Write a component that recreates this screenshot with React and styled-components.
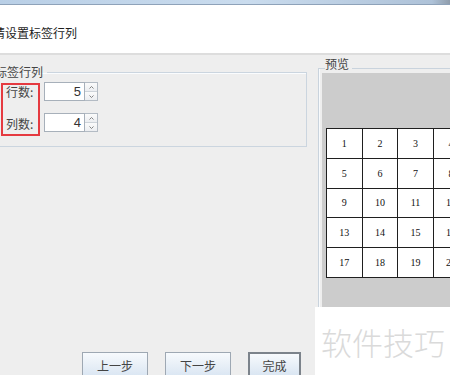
import React from "react";
import styled, { createGlobalStyle } from "styled-components";

const GlobalStyle = createGlobalStyle`
  *, *::before, *::after { box-sizing: border-box; }
  html, body { margin: 0; padding: 0; }
  body {
    width: 450px;
    height: 375px;
    overflow: hidden;
    background: #eeeeee;
    font-family: "Noto Sans CJK SC", "DejaVu Sans", sans-serif;
    color: #333;
  }
`;

const Window = styled.div`
  position: relative;
  width: 450px;
  height: 375px;
  overflow: hidden;
  display: flex;
  flex-direction: column;
`;

const FrameEdge = styled.div`
  flex: none;
  height: 5px;
  background: linear-gradient(to right, #b9cfe6 0%, #cadcee 55%, #aec2d8 96%, #8f9cab 100%);
  border-bottom: 1px solid #8ea2b9;
`;

const Header = styled.div`
  flex: none;
  height: 50px;
  background: #fff;
  border-bottom: 2px solid #dddddd;
  display: flex;
  align-items: center;
`;

const HeaderTitle = styled.div`
  margin-left: -7px;
  margin-top: 6px;
  font-size: 12px;
  color: #1e1e1e;
`;

const Body = styled.div`
  flex: 1;
  display: flex;
  min-height: 0;
`;

const LeftPane = styled.div`
  flex: none;
  width: 315px;
  display: flex;
  flex-direction: column;
`;

const GroupBox = styled.fieldset`
  margin: 10px 8px 0 -12px;
  padding: 4px 0 10px 12px;
  min-width: 0;
  border: 1px solid #cbd5df;
  box-shadow: inset 1px 1px 0 #fafcfe;
`;

const GroupTitle = styled.legend`
  margin-left: -6px;
  padding: 0 4px 0 0;
  font-size: 12px;
  line-height: 14px;
  color: #444;
`;

const FieldRow = styled.div`
  display: flex;
  align-items: flex-start;
`;

const RedMark = styled.div`
  width: 39px;
  height: 53px;
  border: 2px solid #e53a40;
  padding: 0 0 3px 3px;
  display: flex;
  flex-direction: column;
  justify-content: space-between;
`;

const FieldLabel = styled.span`
  font-size: 12px;
  line-height: 14px;
  color: #444;
`;

const SpinColumn = styled.div`
  margin: -1px 0 0 4px;
  display: flex;
  flex-direction: column;
  gap: 12px;
`;

const Spinner = styled.div`
  display: flex;
  height: 19px;
`;

const SpinField = styled.div`
  width: 41px;
  height: 19px;
  border: 1px solid #a7b0ba;
  background: #fff;
  padding-right: 3px;
  text-align: right;
  font-family: "Liberation Sans", Arial, sans-serif;
  font-size: 13px;
  line-height: 17px;
  color: #333;
`;

const SpinButtons = styled.div`
  width: 13px;
  display: flex;
  flex-direction: column;
  border: 1px solid #b3bbc4;
  border-left: none;
`;

const SpinButton = styled.div`
  flex: 1;
  display: flex;
  align-items: center;
  justify-content: center;
  background: linear-gradient(#fbfbfb, #eceef1);
  border-top: ${(p) => (p.$lower ? "1px solid #cdd3d9" : "none")};
`;

const Caret = styled.svg`
  width: 5px;
  height: 3px;
  display: block;
`;

const ButtonBar = styled.div`
  margin-top: auto;
  margin-bottom: -3px;
  padding-left: 82px;
  display: flex;
  gap: 17px;
`;

const WizardButton = styled.div`
  width: ${(p) => p.$w}px;
  height: 26px;
  display: flex;
  align-items: center;
  justify-content: center;
  border: ${(p) => (p.$primary ? "2px solid #7c838b" : "1px solid #9ea8b3")};
  background: linear-gradient(#f7fafd, #d9e5f2);
  font-size: 12px;
  color: #444;
`;

const RightPane = styled.div`
  flex: 1;
  min-width: 0;
`;

const PreviewBox = styled.fieldset`
  margin: 2px 0 0 3px;
  padding: 0 0 0 3px;
  width: 200px;
  min-width: 0;
  border: 1px solid #c9d3dd;
  box-shadow: inset 1px 0 0 #f8fafc;
`;

const PreviewTitle = styled.legend`
  margin-left: 3px;
  padding: 0 3px 8px 0;
  font-size: 12px;
  line-height: 14px;
  color: #444;
`;

const Canvas = styled.div`
  margin-top: -6px;
  height: 250px;
  background: #cccccc;
  padding: 55px 0 0 4px;
`;

const Sheet = styled.div`
  display: grid;
  grid-template-columns: repeat(4, 34.6px);
  grid-auto-rows: 28.8px;
  gap: 1px;
  padding: 1px;
  width: max-content;
  background: #1f1f1f;
`;

const Cell = styled.div`
  background: #fff;
  display: flex;
  align-items: center;
  justify-content: center;
  font-family: "Liberation Serif", "Times New Roman", serif;
  font-size: 10px;
  color: #111;
`;

const Watermark = styled.div`
  position: absolute;
  right: 0;
  bottom: 0;
  width: 135px;
  height: 68px;
  background: #fff;
  padding-left: 6px;
  display: flex;
  align-items: center;
  font-size: 31px;
  font-weight: 300;
  color: #dadada;
`;

const cells = Array.from({ length: 20 }, (_, i) => i + 1);

const Up = () => (
  <Caret viewBox="0 0 5 3">
    <path d="M0.5 2.5 L2.5 0.5 L4.5 2.5" fill="none" stroke="#777" strokeWidth="0.9" />
  </Caret>
);

const Down = () => (
  <Caret viewBox="0 0 5 3">
    <path d="M0.5 0.5 L2.5 2.5 L4.5 0.5" fill="none" stroke="#777" strokeWidth="0.9" />
  </Caret>
);

const NumberSpinner = ({ value }) => (
  <Spinner>
    <SpinField>{value}</SpinField>
    <SpinButtons>
      <SpinButton><Up /></SpinButton>
      <SpinButton $lower><Down /></SpinButton>
    </SpinButtons>
  </Spinner>
);

const App = () => {
  return (
    <Window>
      <GlobalStyle />
      <FrameEdge />
      <Header>
        <HeaderTitle>请设置标签行列</HeaderTitle>
      </Header>
      <Body>
        <LeftPane>
          <GroupBox>
            <GroupTitle>标签行列</GroupTitle>
            <FieldRow>
              <RedMark>
                <FieldLabel>行数:</FieldLabel>
                <FieldLabel>列数:</FieldLabel>
              </RedMark>
              <SpinColumn>
                <NumberSpinner value={5} />
                <NumberSpinner value={4} />
              </SpinColumn>
            </FieldRow>
          </GroupBox>
          <ButtonBar>
            <WizardButton $w={66}>上一步</WizardButton>
            <WizardButton $w={66}>下一步</WizardButton>
            <WizardButton $w={53} $primary>完成</WizardButton>
          </ButtonBar>
        </LeftPane>
        <RightPane>
          <PreviewBox>
            <PreviewTitle>预览</PreviewTitle>
            <Canvas>
              <Sheet>
                {cells.map((n) => (
                  <Cell key={n}>{n}</Cell>
                ))}
              </Sheet>
            </Canvas>
          </PreviewBox>
        </RightPane>
      </Body>
      <Watermark>软件技巧</Watermark>
    </Window>
  );
};

export default App;
